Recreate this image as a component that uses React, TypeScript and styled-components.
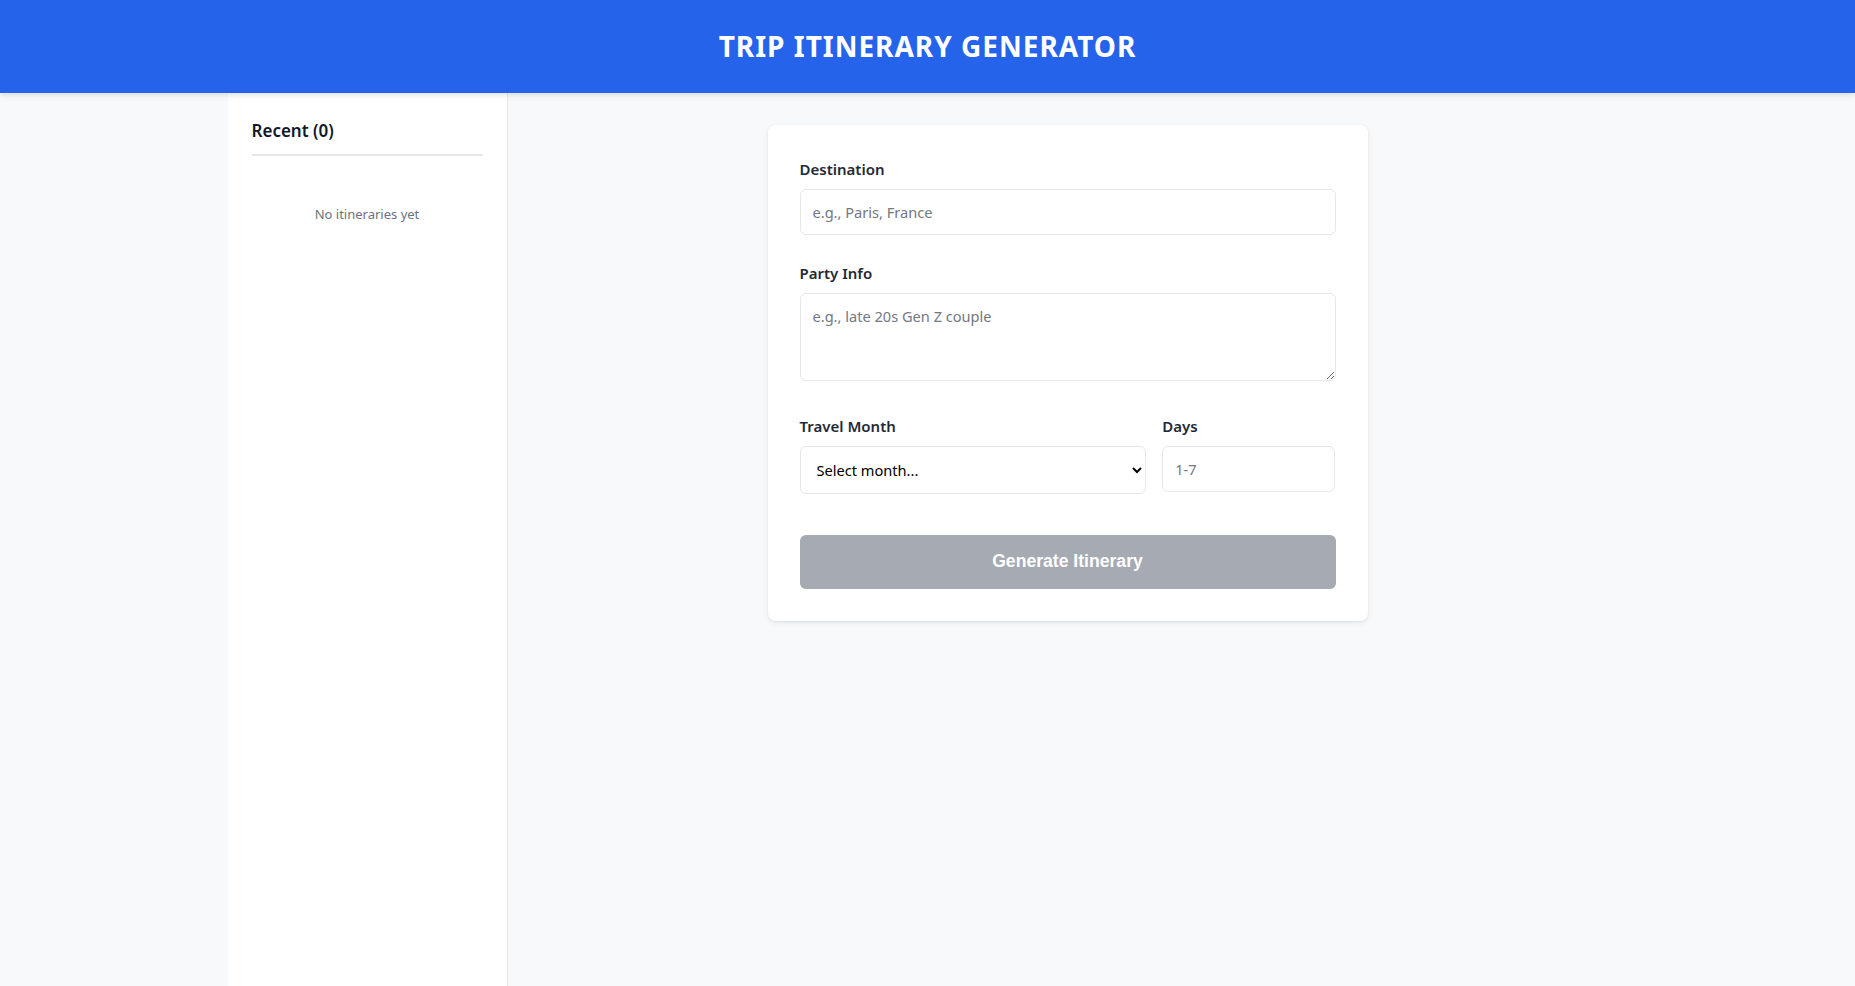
import React from "react";
import styled, { createGlobalStyle } from "styled-components";

const GlobalStyle = createGlobalStyle`
  * { box-sizing: border-box; }
  html, body { margin: 0; padding: 0; }
  body {
    font-family: "Noto Sans", "Open Sans", sans-serif;
    background: #f8f9fb;
    color: #1f2937;
    line-height: 1.6;
  }
`;

const Header = styled.header`
  background: #2563eb;
  padding: 24px 0;
  text-align: center;
  box-shadow: 0 2px 6px rgba(0, 0, 0, 0.12);
  position: relative;
  z-index: 1;
`;

const Title = styled.h1`
  margin: 0;
  color: #ffffff;
  font-size: 28px;
  font-weight: 700;
  line-height: 1.6;
  letter-spacing: 1px;
  text-transform: uppercase;
`;

const Layout = styled.div`
  max-width: 1400px;
  margin: 0 auto;
  display: flex;
  min-height: calc(100vh - 93px);
`;

const Sidebar = styled.aside`
  width: 280px;
  flex-shrink: 0;
  background: #ffffff;
  border-right: 1px solid #e5e7eb;
  padding: 24px;
`;

const SidebarTitle = styled.h3`
  margin: 0;
  font-size: 17px;
  font-weight: 600;
  color: #111827;
  line-height: 1.6;
  padding-bottom: 10px;
  border-bottom: 2px solid #e5e7eb;
`;

const EmptyText = styled.p`
  margin: 48px 0 0;
  text-align: center;
  font-size: 13px;
  color: #6b7280;
`;

const Main = styled.main`
  flex: 1;
  padding: 32px;
  display: flex;
  justify-content: center;
  align-items: flex-start;
`;

const Card = styled.div`
  width: 100%;
  max-width: 600px;
  background: #ffffff;
  border-radius: 8px;
  padding: 32px;
  box-shadow: 0 1px 3px rgba(0, 0, 0, 0.08), 0 2px 8px rgba(0, 0, 0, 0.05);
`;

const Field = styled.div<{ $gap?: number }>`
  display: flex;
  flex-direction: column;
  margin-bottom: ${(p) => (p.$gap ?? 26)}px;
`;

const Label = styled.label`
  font-size: 15px;
  font-weight: 600;
  color: #1f2937;
  line-height: 1.6;
  margin-bottom: 8px;
`;

const controlBase = `
  width: 100%;
  font-family: "Noto Sans", "Open Sans", sans-serif;
  font-size: 14.6px;
  line-height: 20px;
  color: #111827;
  background: #ffffff;
  border: 1px solid #e5e7eb;
  border-radius: 6px;
  padding: 12px;
  outline: none;
  &::placeholder { color: #74787f; }
`;

const TextInput = styled.input`
  ${controlBase}
  display: block;
  height: 46px;
`;

const TextArea = styled.textarea`
  ${controlBase}
  display: block;
  height: 88px;
  resize: vertical;
`;

const Select = styled.select`
  ${controlBase}
  display: block;
  height: 48px;
  color: #000000;
`;

const Row = styled.div`
  display: grid;
  grid-template-columns: 2fr 1fr;
  gap: 16px;
  margin-bottom: 41px;
`;

const SubmitButton = styled.button`
  width: 100%;
  display: block;
  border: none;
  border-radius: 6px;
  padding: 16.4px;
  background: #a6aab2;
  color: #ffffff;
  font-family: "Liberation Sans", Arial, sans-serif;
  font-size: 17.6px;
  font-weight: 700;
  cursor: not-allowed;
`;

export default function App() {
  return (
    <>
      <GlobalStyle />
      <Header>
        <Title>Trip Itinerary Generator</Title>
      </Header>
      <Layout>
        <Sidebar>
          <SidebarTitle>Recent (0)</SidebarTitle>
          <EmptyText>No itineraries yet</EmptyText>
        </Sidebar>
        <Main>
          <Card>
            <Field>
              <Label htmlFor="dest">Destination</Label>
              <TextInput id="dest" placeholder="e.g., Paris, France" />
            </Field>
            <Field $gap={33}>
              <Label htmlFor="party">Party Info</Label>
              <TextArea id="party" placeholder="e.g., late 20s Gen Z couple" />
            </Field>
            <Row>
              <Field $gap={0}>
                <Label htmlFor="month">Travel Month</Label>
                <Select id="month" defaultValue="">
                  <option value="">Select month...</option>
                  <option>January</option>
                  <option>February</option>
                  <option>March</option>
                  <option>April</option>
                  <option>May</option>
                  <option>June</option>
                  <option>July</option>
                  <option>August</option>
                  <option>September</option>
                  <option>October</option>
                  <option>November</option>
                  <option>December</option>
                </Select>
              </Field>
              <Field $gap={0}>
                <Label htmlFor="days">Days</Label>
                <TextInput id="days" type="number" placeholder="1-7" />
              </Field>
            </Row>
            <SubmitButton disabled>Generate Itinerary</SubmitButton>
          </Card>
        </Main>
      </Layout>
    </>
  );
}
